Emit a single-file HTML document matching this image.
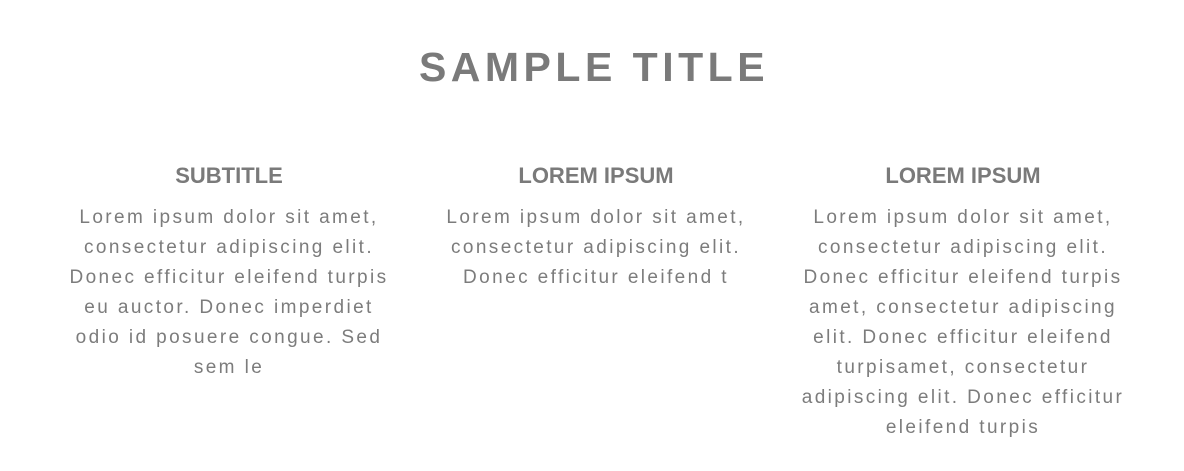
<!DOCTYPE html>
<html><head><style>
body{margin:0;width:1184px;height:471px;background:#fff;font-family:"Liberation Sans",sans-serif;color:#7c7c7c;overflow:hidden;position:relative}
h1{position:absolute;top:40px;left:0;width:1184px;text-align:center;margin:0;font-weight:bold;font-size:41px;letter-spacing:4.5px;line-height:54px;text-indent:4px;color:#7a7a7a}
.col{position:absolute;top:160px;width:360px;text-align:center}
h2{margin:0;font-size:22px;font-weight:bold;line-height:32px;color:#7a7a7a}
p{margin:11px 0 0;font-size:19px;line-height:30px;letter-spacing:2.4px;white-space:nowrap}
</style></head><body>
<h1>SAMPLE TITLE</h1>
<div class="col" style="left:49px"><h2>SUBTITLE</h2><p>Lorem ipsum dolor sit amet,<br>consectetur adipiscing elit.<br>Donec efficitur eleifend turpis<br>eu auctor. Donec imperdiet<br>odio id posuere congue. Sed<br>sem le</p></div>
<div class="col" style="left:416px"><h2>LOREM IPSUM</h2><p>Lorem ipsum dolor sit amet,<br>consectetur adipiscing elit.<br>Donec efficitur eleifend t</p></div>
<div class="col" style="left:783px"><h2>LOREM IPSUM</h2><p>Lorem ipsum dolor sit amet,<br>consectetur adipiscing elit.<br>Donec efficitur eleifend turpis<br>amet, consectetur adipiscing<br>elit. Donec efficitur eleifend<br>turpisamet, consectetur<br>adipiscing elit. Donec efficitur<br>eleifend turpis</p></div>
</body></html>
